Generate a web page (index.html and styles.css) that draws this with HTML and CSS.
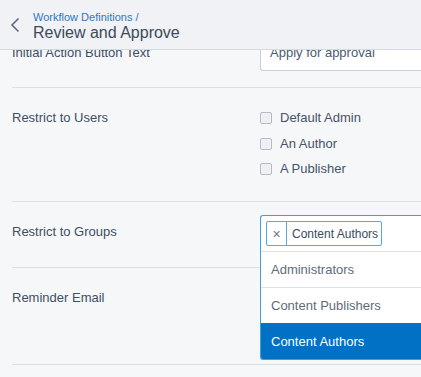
FILE: index.html
```html
<html><head>
<meta charset="UTF-8">
<meta name="viewport" content="width=device-width, initial-scale=1.0">
<title>Review and Approve</title>
<link rel="stylesheet" href="styles.css">
</head>
<body>
    <div class="header">
        <svg class="back" width="10" height="16" viewBox="0 0 10 16">
            <path d="M8.5 1.5 L2 8 L8.5 14.5" fill="none" stroke="#5b6a7e" stroke-width="1.6"/>
        </svg>
        <div class="titles">
            <a class="crumb">Workflow Definitions /</a>
            <div class="page-title">Review and Approve</div>
        </div>
    </div>

    <div class="scroller">
        <div class="form">

            <div class="row">
                <div class="label">Initial Action Button Text</div>
                <div class="field">
                    <div class="text-input">Apply for approval</div>
                </div>
            </div>

            <div class="row">
                <div class="label">Restrict to Users</div>
                <div class="field">
                    <div class="check-list">
                        <label class="check"><span class="box"></span>Default Admin</label>
                        <label class="check"><span class="box"></span>An Author</label>
                        <label class="check"><span class="box"></span>A Publisher</label>
                    </div>
                </div>
            </div>

            <div class="row">
                <div class="label">Restrict to Groups</div>
                <div class="field">
                    <div class="multi-select">
                        <div class="control">
                            <span class="token"><span class="token-x">×</span><span class="token-text">Content Authors</span></span>
                        </div>
                        <!-- open dropdown sits over the next row -->
                        <div class="menu">
                            <div class="option">Administrators</div>
                            <div class="option">Content Publishers</div>
                            <div class="option selected">Content Authors</div>
                        </div>
                    </div>
                </div>
            </div>

            <div class="row tall">
                <div class="label">Reminder Email</div>
                <div class="field"></div>
            </div>

        </div>
    </div>
</body></html>
```

FILE: styles.css
```css
body {
    font-family: "Liberation Sans", Arial, sans-serif;
    font-size: 13px;
    color: #404e64;
    background-color: #f6f7f9;
    margin: 0;
    overflow: hidden;
}

.header {
    height: 49px;
    background-color: #f0f2f5;
    border-bottom: 1px solid #d6dbe1;
    display: flex;
    align-items: flex-start;
    position: relative;
    z-index: 2;
}

.back {
    margin: 17px 13px 0 10px;
}

.titles {
    display: flex;
    flex-direction: column;
    padding-top: 10px;
}

.crumb {
    font-size: 11px;
    line-height: 14px;
    color: #2f78c4;
}

.page-title {
    font-size: 16px;
    line-height: 20px;
    color: #3d4a5a;
    margin-top: -1px;
}

.scroller {
    height: 327px;
    overflow: hidden;
}

/* page is scrolled a little, first row sits under the header */
.form {
    margin-top: -27px;
}

.row {
    display: grid;
    grid-template-columns: 248px 1fr;
    margin-left: 12px;
    padding: 13px 0 16px 0;
    border-bottom: 1px solid #dde1e7;
}

.row.tall {
    min-height: 67px;
}

.label {
    line-height: 18px;
    padding-top: 8px;
}

.field {
    position: relative;
}

.text-input {
    height: 33px;
    line-height: 32px;
    background-color: white;
    border: 1px solid #c9d0da;
    border-right: none;
    border-radius: 3px 0 0 3px;
    padding-left: 9px;
    color: #4a5a70;
}

.check-list {
    display: flex;
    flex-direction: column;
    gap: 7.5px;
    padding: 8px 0 7px 0;
}

.check {
    display: flex;
    align-items: center;
    line-height: 18px;
    color: #46536a;
}

.box {
    width: 10px;
    height: 10px;
    border: 1px solid #b4bbc5;
    border-radius: 2px;
    background-color: #eef0f3;
    margin-right: 8px;
}

.multi-select {
    position: relative;
}

.control {
    height: 25px;
    padding: 5px;
    background-color: white;
    border: 1px solid #3e9fe0;
    border-bottom: none;
    border-right: none;
    border-radius: 3px 0 0 0;
}

.token {
    display: inline-flex;
    height: 23px;
    border: 1px solid #5aa8e1;
    border-radius: 2px;
    line-height: 24px;
}

.token-x {
    width: 19px;
    text-align: center;
    border-right: 1px solid #5aa8e1;
    color: #6b7788;
    font-size: 14px;
}

.token-text {
    padding: 0 3px 0 5px;
    font-size: 12px;
    color: #3b4a5e;
}

.menu {
    position: absolute;
    top: 100%;
    left: 0;
    right: 0;
    z-index: 1;
    background-color: white;
    border: 1px solid #3e9fe0;
    border-top: none;
    border-right: none;
    border-radius: 0 0 0 3px;
    overflow: hidden;
}

.option {
    height: 35px;
    line-height: 36px;
    padding-left: 10px;
    border-top: 1px solid #dde1e7;
    color: #5f6b7a;
}

.option.selected {
    background-color: #0071c5;
    color: white;
    border-top-color: #0071c5;
}
```
